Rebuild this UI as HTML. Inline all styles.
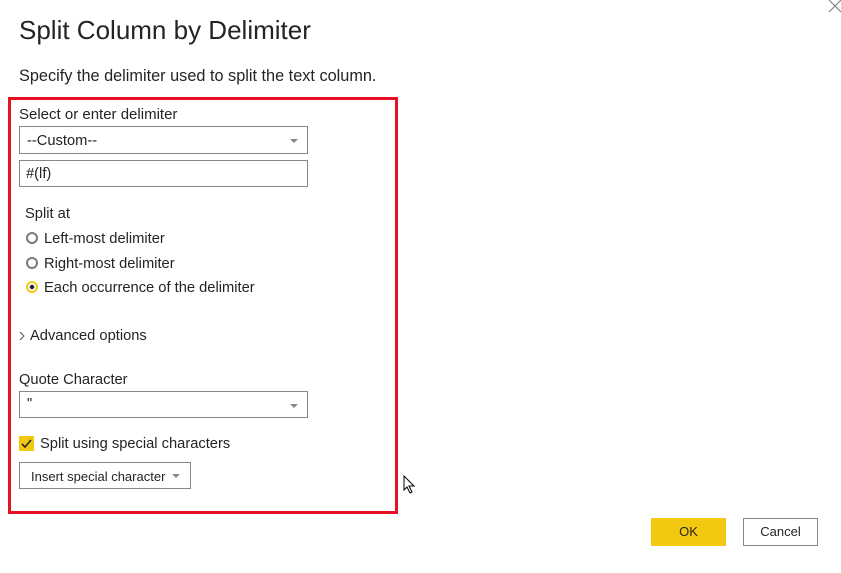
<!DOCTYPE html>
<html><head><style>
body{margin:0;width:841px;height:573px;background:#fff;font-family:"Liberation Sans",sans-serif;color:#252423;position:relative;overflow:hidden}
.a{position:absolute;white-space:nowrap}
.box{position:absolute;border:1px solid #8a8886;background:#fff;box-sizing:border-box}
.t{font-size:14.7px}
.radio{position:absolute;width:8px;height:8px;border:2px solid #7a7a7a;border-radius:50%}
.caret{position:absolute;width:0;height:0;border-left:4px solid transparent;border-right:4px solid transparent;border-top:4px solid #8a8886}
</style></head><body>
<div class="a" style="left:19px;top:15px;font-size:26px;color:#252423">Split Column by Delimiter</div>
<svg class="a" style="left:828px;top:0px" width="14" height="14"><path d="M1 0L13 12M13 0L1 12" stroke="#777" stroke-width="1"/></svg>
<div class="a" style="left:19px;top:67px;font-size:16.3px">Specify the delimiter used to split the text column.</div>
<div class="a" style="left:8px;top:97px;width:384px;height:411px;border:3px solid #e81123"></div>
<div class="a" style="left:19px;top:106px;font-size:15px">Select or enter delimiter</div>
<div class="box" style="left:19px;top:126px;width:289px;height:28px"></div>
<div class="a t" style="left:27px;top:133px">--Custom--</div>
<div class="caret" style="left:290px;top:139px"></div>
<div class="box" style="left:19px;top:160px;width:289px;height:27px"></div>
<div class="a t" style="left:26px;top:166px">#(lf)</div>
<div class="a t" style="left:25px;top:206px">Split at</div>
<div class="radio" style="left:26px;top:232px"></div>
<div class="a t" style="left:44px;top:231px">Left-most delimiter</div>
<div class="radio" style="left:26px;top:257px"></div>
<div class="a t" style="left:44px;top:256px">Right-most delimiter</div>
<div class="radio" style="left:26px;top:281px;border-color:#f2c811;background:radial-gradient(#252423 2px,#fff 2.5px)"></div>
<div class="a t" style="left:44px;top:280px">Each occurrence of the delimiter</div>
<svg class="a" style="left:18px;top:331px" width="8" height="10"><path d="M2 1L6 5L2 9" fill="none" stroke="#555"/></svg>
<div class="a t" style="left:30px;top:328px">Advanced options</div>
<div class="a t" style="left:19px;top:372px">Quote Character</div>
<div class="box" style="left:19px;top:391px;width:289px;height:27px"></div>
<div class="a t" style="left:27px;top:396px">"</div>
<div class="caret" style="left:290px;top:404px"></div>
<div class="a" style="left:19px;top:436px;width:15px;height:15px;background:#f2c811"></div>
<svg class="a" style="left:19px;top:436px" width="15" height="15"><path d="M3 8L6 11L12 4" fill="none" stroke="#252423" stroke-width="1.6"/></svg>
<div class="a t" style="left:40px;top:436px">Split using special characters</div>
<div class="box" style="left:19px;top:462px;width:172px;height:27px"></div>
<div class="a" style="left:31px;top:469px;font-size:13px">Insert special character</div>
<div class="caret" style="left:172px;top:474px"></div>
<svg class="a" style="left:403px;top:475px" width="14" height="20"><path d="M1 1L1 15L4 12L7 18L9 17L6 11L11 11Z" fill="#fff" stroke="#000"/></svg>
<div class="a" style="left:651px;top:518px;width:75px;height:28px;background:#f2c811"></div>
<div class="a" style="left:651px;top:524px;width:75px;text-align:center;font-size:13px">OK</div>
<div class="box" style="left:743px;top:518px;width:75px;height:28px"></div>
<div class="a" style="left:743px;top:524px;width:75px;text-align:center;font-size:13px">Cancel</div>
</body></html>
